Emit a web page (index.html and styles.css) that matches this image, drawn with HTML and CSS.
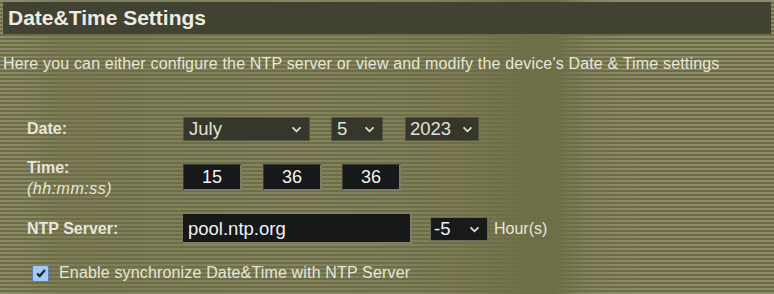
FILE: index.html
```html
<!DOCTYPE html>
<html>
<head>
<meta charset="utf-8">
<link rel="stylesheet" href="styles.css">
</head>
<body>
<div class="page">
  <h1 class="title">Date&amp;Time Settings</h1>
  <p class="desc">Here you can either configure the NTP server or view and modify the device's Date &amp; Time settings</p>
  <div class="form">
    <div class="row row-date">
      <div class="label"><b>Date:</b></div>
      <div class="controls">
        <div class="sel sel-month">July<svg class="chev" viewBox="0 0 12 8"><path d="M1.5 1.5 L6 6 L10.5 1.5" /></svg></div>
        <div class="sel sel-day">5<svg class="chev" viewBox="0 0 12 8"><path d="M1.5 1.5 L6 6 L10.5 1.5" /></svg></div>
        <div class="sel sel-year">2023<svg class="chev" viewBox="0 0 12 8"><path d="M1.5 1.5 L6 6 L10.5 1.5" /></svg></div>
      </div>
    </div>
    <div class="row row-time">
      <div class="label"><b>Time:</b><i>(hh:mm:ss)</i></div>
      <div class="controls">
        <div class="num">15</div>
        <div class="num">36</div>
        <div class="num">36</div>
      </div>
    </div>
    <div class="row row-ntp">
      <div class="label"><b>NTP Server:</b></div>
      <div class="controls">
        <div class="ntp">pool.ntp.org</div>
        <div class="sel sel-tz">-5<svg class="chev" viewBox="0 0 12 8"><path d="M1.5 1.5 L6 6 L10.5 1.5" /></svg></div>
        <span class="unit">Hour(s)</span>
      </div>
    </div>
    <div class="row row-check">
      <span class="check"><svg viewBox="0 0 16 16"><path d="M3.5 8.5 L6.5 11.5 L12.5 4.5" /></svg></span>
      <span class="check-text">Enable synchronize Date&amp;Time with NTP Server</span>
    </div>
  </div>
</div>
</body>
</html>
```
FILE: styles.css
```css
html, body {
  margin: 0;
  padding: 0;
}
body {
  width: 774px;
  height: 294px;
  overflow: hidden;
  font-family: "Liberation Sans", Arial, sans-serif;
  color: #e6e6da;
  background:
    linear-gradient(to right,
      rgba(111,111,71,0) 0px,
      rgba(111,111,71,0.1) 25px,
      rgba(111,111,71,0.5) 60px,
      rgba(111,111,71,0.4) 150px,
      rgba(111,111,71,0.25) 300px,
      rgba(111,111,71,0.45) 440px,
      rgba(111,111,71,1) 530px,
      rgba(111,111,71,1) 555px,
      rgba(111,111,71,0.2) 590px,
      rgba(111,111,71,0) 640px),
    repeating-linear-gradient(to bottom,
      #8c8b6a 0px, #8c8b6a 2px,
      #6d6c45 2px, #6d6c45 4px);
}
.page {
  padding-top: 2px;
}
.title {
  margin: 0 3px;
  height: 32px;
  line-height: 32px;
  padding-left: 5px;
  background: #424232;
  color: #ecece2;
  font-size: 21px;
  font-weight: bold;
}
.desc {
  margin: 21px 0 0 3px;
  font-size: 16px;
  line-height: 18px;
  letter-spacing: 0.17px;
}
.form {
  padding-left: 27px;
  margin-top: 44px;
}
.row {
  display: flex;
  align-items: center;
}
.label {
  width: 156px;
  font-size: 16px;
  line-height: 18px;
  display: flex;
  flex-direction: column;
}
.label b {
  font-weight: bold;
}
.label i {
  font-style: italic;
  font-size: 16px;
  line-height: 16px;
  letter-spacing: 0.5px;
  margin-top: 4px;
}
.controls {
  display: flex;
  align-items: center;
}
.sel {
  box-sizing: border-box;
  height: 24px;
  background: #35362c;
  border: 1px solid #55553f;
  color: #e2e2d4;
  font-size: 18.5px;
  display: flex;
  align-items: center;
  justify-content: space-between;
  padding: 0 7px 0 5px;
}
.chev {
  width: 11px;
  height: 7px;
  fill: none;
  stroke: #e2e2d4;
  stroke-width: 2;
}
.sel-month { width: 127px; margin-right: 21px; }
.sel-day { width: 52px; margin-right: 22px; }
.sel-year { width: 74px; padding-right: 5px; padding-left: 4px; }
.row-time {
  margin-top: 23px;
  height: 27px;
  align-items: flex-start;
}
.row-time .label {
  margin-top: -5px;
}
.num {
  box-sizing: border-box;
  width: 59px;
  height: 27px;
  background: #17181a;
  border-right: 2px solid #7d7c66;
  border-bottom: 2px solid #7d7c66;
  border-top: 1px solid #3d3d30;
  border-left: 1px solid #3d3d30;
  color: #f2f2ee;
  font-size: 18px;
  text-align: center;
  line-height: 24px;
  margin-right: 21px;
}
.num:nth-child(2) { margin-right: 20px; }
.row-ntp {
  margin-top: 23px;
}
.ntp {
  box-sizing: border-box;
  width: 229px;
  height: 30px;
  background: #17181a;
  border-right: 2px solid #7d7c66;
  border-bottom: 2px solid #7d7c66;
  color: #f2f2ee;
  font-size: 18.5px;
  line-height: 29px;
  padding-left: 5px;
  margin-right: 18px;
}
.sel-tz {
  width: 58px;
  background: #18191b;
  border-color: #6a6a58;
  padding-left: 3px;
  color: #f0f0ea;
}
.unit {
  font-size: 16px;
  margin-left: 6px;
}
.row-check {
  margin-top: 20px;
  padding-left: 5px;
}
.check {
  box-sizing: border-box;
  width: 17px;
  height: 17px;
  background: #a3c8f4;
  border: 1px solid #5b7fae;
  border-radius: 2px;
  display: inline-flex;
  align-items: center;
  justify-content: center;
}
.check svg {
  width: 14px;
  height: 14px;
  fill: none;
  stroke: #1c2430;
  stroke-width: 2.6;
}
.check-text {
  font-size: 16px;
  margin-left: 10px;
  letter-spacing: 0.16px;
}
```
